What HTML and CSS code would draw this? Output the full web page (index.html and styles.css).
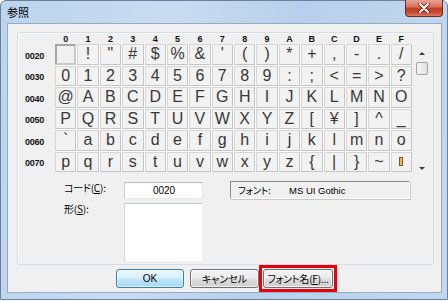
FILE: index.html
```html
<!DOCTYPE html>
<html lang="ja">
<head>
<meta charset="utf-8">
<title>参照</title>
<link rel="stylesheet" href="styles.css">
</head>
<body>
<div class="window">
  <div class="titlebar">
    <span class="title">参照</span>
    <button class="close" aria-label="閉じる">
      <svg width="12" height="10" viewBox="0 0 12 10"><path d="M2 1 L10 9 M10 1 L2 9" stroke="#5a1d14" stroke-width="3.4" stroke-linecap="round"/><path d="M2 1 L10 9 M10 1 L2 9" stroke="#fff" stroke-width="2" stroke-linecap="round"/></svg>
    </button>
  </div>
  <div class="client">
    <div class="panel">
      <div class="map">
        <div class="colhead">
          <span>0</span><span>1</span><span>2</span><span>3</span><span>4</span><span>5</span><span>6</span><span>7</span><span>8</span><span>9</span><span>A</span><span>B</span><span>C</span><span>D</span><span>E</span><span>F</span>
        </div>
        <div class="rowhead">
          <span>0020</span><span>0030</span><span>0040</span><span>0050</span><span>0060</span><span>0070</span>
        </div>
        <div class="cells">
          <span class="cell sel"></span><span class="cell">!</span><span class="cell">"</span><span class="cell">#</span><span class="cell">$</span><span class="cell">%</span><span class="cell">&amp;</span><span class="cell">'</span><span class="cell">(</span><span class="cell">)</span><span class="cell">*</span><span class="cell">+</span><span class="cell">,</span><span class="cell">-</span><span class="cell">.</span><span class="cell">/</span>
          <span class="cell">0</span><span class="cell">1</span><span class="cell">2</span><span class="cell">3</span><span class="cell">4</span><span class="cell">5</span><span class="cell">6</span><span class="cell">7</span><span class="cell">8</span><span class="cell">9</span><span class="cell">:</span><span class="cell">;</span><span class="cell">&lt;</span><span class="cell">=</span><span class="cell">&gt;</span><span class="cell">?</span>
          <span class="cell">@</span><span class="cell">A</span><span class="cell">B</span><span class="cell">C</span><span class="cell">D</span><span class="cell">E</span><span class="cell">F</span><span class="cell">G</span><span class="cell">H</span><span class="cell">I</span><span class="cell">J</span><span class="cell">K</span><span class="cell">L</span><span class="cell">M</span><span class="cell">N</span><span class="cell">O</span>
          <span class="cell">P</span><span class="cell">Q</span><span class="cell">R</span><span class="cell">S</span><span class="cell">T</span><span class="cell">U</span><span class="cell">V</span><span class="cell">W</span><span class="cell">X</span><span class="cell">Y</span><span class="cell">Z</span><span class="cell">[</span><span class="cell">¥</span><span class="cell">]</span><span class="cell">^</span><span class="cell">_</span>
          <span class="cell">`</span><span class="cell">a</span><span class="cell">b</span><span class="cell">c</span><span class="cell">d</span><span class="cell">e</span><span class="cell">f</span><span class="cell">g</span><span class="cell">h</span><span class="cell">i</span><span class="cell">j</span><span class="cell">k</span><span class="cell">l</span><span class="cell">m</span><span class="cell">n</span><span class="cell">o</span>
          <span class="cell">p</span><span class="cell">q</span><span class="cell">r</span><span class="cell">s</span><span class="cell">t</span><span class="cell">u</span><span class="cell">v</span><span class="cell">w</span><span class="cell">x</span><span class="cell">y</span><span class="cell">z</span><span class="cell">{</span><span class="cell">|</span><span class="cell">}</span><span class="cell">~</span><span class="cell"><span class="del"></span></span>
        </div>
        <div class="scrollbar">
          <span class="sb-btn"><span class="arrow up"></span></span>
          <span class="thumb"></span>
          <span class="sb-space"></span>
          <span class="sb-btn"><span class="arrow down"></span></span>
        </div>
      </div>
      <div class="details">
        <span class="label">コード(<u>C</u>):</span>
        <div class="codebox">0020</div>
        <span class="spacer"></span>
        <div class="fontbox"><span class="fk">フォント:</span><span class="fv">MS UI Gothic</span></div>
        <span class="label">形(<u>S</u>):</span>
        <div class="shapebox"></div>
      </div>
    </div>
    <div class="buttons">
      <button class="btn default">OK</button>
      <button class="btn cancel">キャンセル</button>
      <span class="highlight"><button class="btn font">フォント名(<u>F</u>)...</button></span>
    </div>
  </div>
</div>
</body>
</html>
```
FILE: styles.css
```css
html, body {
  margin: 0;
  padding: 0;
  background: #ffffff;
}
body {
  font-family: "Liberation Sans", "Noto Sans CJK JP", sans-serif;
  color: #000;
}
.window {
  box-sizing: border-box;
  width: 448px;
  height: 300px;
  border: 1px solid #6a809c;
  border-radius: 6px 6px 0 0;
  padding: 0 5px 6px 6px;
  background: linear-gradient(100deg, #bcd4ee 0%, #c9dcf1 35%, #b8d0eb 60%, #c3d8ef 100%);
  display: flex;
  flex-direction: column;
}
.titlebar {
  height: 22px;
  display: flex;
  align-items: flex-start;
}
.title {
  font-family: "Noto Sans CJK JP", sans-serif;
  font-size: 11px;
  line-height: 11px;
  margin-top: 6px;
  color: #000;
}
.close {
  margin-left: auto;
  margin-top: -1px;
  margin-right: -1px;
  width: 38px;
  height: 17px;
  padding: 0;
  border: 1px solid #6b2b22;
  border-top: none;
  border-radius: 0 0 4px 4px;
  background: linear-gradient(#e9a394 0%, #d8725f 42%, #c43d26 52%, #c84a32 78%, #e07a60 100%);
  display: flex;
  align-items: center;
  justify-content: center;
}
.close svg { display: block; }
.client {
  box-sizing: border-box;
  height: 270px;
  border: 1px solid #95aac4;
  background: #f0f0f0;
  display: flex;
  flex-direction: column;
}
.panel {
  box-sizing: border-box;
  height: 236px;
  margin: 8px 7px 0 9px;
  border: 1px solid #d5dfe5;
  border-radius: 2px;
  box-shadow: inset 1px 1px 0 #fafafa;
  padding-top: 2px;
}
.map {
  display: grid;
  grid-template-columns: 34px 357px 14px;
  grid-template-rows: 9px 128px;
  column-gap: 3px;
}
.colhead {
  grid-column: 2;
  grid-row: 1;
  display: grid;
  grid-template-columns: repeat(16, 1fr);
  column-gap: 1px;
  font-size: 9px;
  line-height: 9px;
  font-weight: bold;
  color: #111;
  text-align: center;
}
.rowhead {
  grid-column: 1;
  grid-row: 2;
  display: grid;
  grid-template-rows: repeat(6, 1fr);
  row-gap: 1px;
  font-size: 9px;
  font-weight: bold;
  color: #111;
  letter-spacing: -0.3px;
}
.rowhead span {
  display: flex;
  align-items: center;
  justify-content: center;
  padding-top: 3px;
  padding-right: 1px;
}
.cells {
  grid-column: 2;
  grid-row: 2;
  display: grid;
  grid-template-columns: repeat(16, 1fr);
  grid-template-rows: repeat(6, 1fr);
  gap: 1px;
  background: #ffffff;
}
.cell {
  box-sizing: border-box;
  display: flex;
  align-items: center;
  justify-content: center;
  border: 1px solid;
  border-color: #d6d6d6 #c4c4c4 #c4c4c4 #d6d6d6;
  background: #f2f2f2;
  font-family: "Liberation Sans", sans-serif;
  font-size: 16px;
  color: #383838;
  line-height: 1;
}
.cell.sel {
  border: 2px solid;
  border-color: #a6a6a6 #c8c8c8 #c8c8c8 #a6a6a6;
  background: #f0f0f0;
}
.del {
  display: block;
  width: 4px;
  height: 9px;
  box-sizing: border-box;
  border: 1px solid #7b5526;
  background: linear-gradient(to right, #f0a040, #f7d070);
}
.scrollbar {
  grid-column: 3;
  grid-row: 2;
  align-self: start;
  height: 132px;
  margin-top: 1px;
  display: flex;
  flex-direction: column;
  align-items: center;
}
.sb-btn {
  height: 17px;
  width: 14px;
  display: flex;
  align-items: center;
  justify-content: center;
}
.arrow {
  width: 0;
  height: 0;
  border-left: 3px solid transparent;
  border-right: 3px solid transparent;
}
.arrow.up { border-bottom: 3px solid #3c3c3c; margin-top: -1px; }
.arrow.down { border-top: 3px solid #3c3c3c; }
.thumb {
  box-sizing: border-box;
  width: 12px;
  height: 13px;
  border: 1px solid #a3a3a3;
  border-radius: 2px;
  background: linear-gradient(to right, #f6f6f6, #e2e2e2);
}
.sb-space { flex: 1; }
.details {
  display: grid;
  grid-template-columns: 60px 79px 27px 180px;
  grid-template-rows: 17px 59px;
  row-gap: 4px;
  margin-top: 10px;
  padding-left: 46px;
}
.label {
  font-family: "Noto Sans CJK JP", sans-serif;
  font-feature-settings: "palt";
  font-size: 10px;
  line-height: 12px;
  letter-spacing: -0.2px;
  color: #000;
}
.label u { text-decoration-thickness: 1px; text-underline-offset: 1px; }
.codebox {
  box-sizing: border-box;
  background: #fff;
  border: 1px solid;
  border-color: #b8bcc2 #e3e9ef #e3e9ef #c8ccd2;
  font-size: 10px;
  display: flex;
  align-items: center;
  justify-content: center;
  padding-left: 1px;
}
.fontbox {
  box-sizing: border-box;
  height: 18px;
  margin-top: -1px;
  border: 1px solid;
  border-color: #8a8a8a #ffffff #ffffff #8a8a8a;
  box-shadow: 1px 1px 0 #c8c8c8;
  display: flex;
  align-items: center;
  padding-left: 7px;
  font-size: 9.5px;
}
.fk {
  font-family: "Noto Sans CJK JP", sans-serif;
  font-feature-settings: "palt";
  width: 51px;
  letter-spacing: -0.3px;
}
.shapebox {
  grid-column: 2;
  box-sizing: border-box;
  background: #fff;
  border: 1px solid;
  border-color: #c8ccd2 #eef1f4 #eef1f4 #d4d8dc;
}
.buttons {
  display: flex;
  align-items: center;
  justify-content: center;
  padding-left: 4px;
  height: 27px;
}
.btn {
  box-sizing: border-box;
  height: 19px;
  padding: 0;
  border: 1px solid #707070;
  border-radius: 3px;
  background: linear-gradient(#f3f3f3 0%, #ebebeb 48%, #dddddd 52%, #cfcfcf 100%);
  box-shadow: inset 0 0 0 1px rgba(255,255,255,0.7);
  font-family: "Noto Sans CJK JP", sans-serif;
  font-feature-settings: "palt";
  font-size: 10px;
  line-height: 10px;
  color: #000;
}
.btn.default {
  width: 68px;
  margin-right: 6px;
  border-color: #3c7fb1;
  background: linear-gradient(#eaf6fd 0%, #d9f0fc 48%, #bee6fd 52%, #a7d9f5 100%);
  box-shadow: inset 0 0 0 1px rgba(255,255,255,0.6);
  font-family: "Liberation Sans", sans-serif;
}
.btn.cancel { width: 69px; }
.highlight {
  display: block;
  border: 3px solid #e8000b;
  padding: 1px;
  line-height: 0;
}
.btn.font { width: 70px; letter-spacing: -0.2px; }
.btn u { text-decoration-thickness: 1px; text-underline-offset: 1px; }
```
